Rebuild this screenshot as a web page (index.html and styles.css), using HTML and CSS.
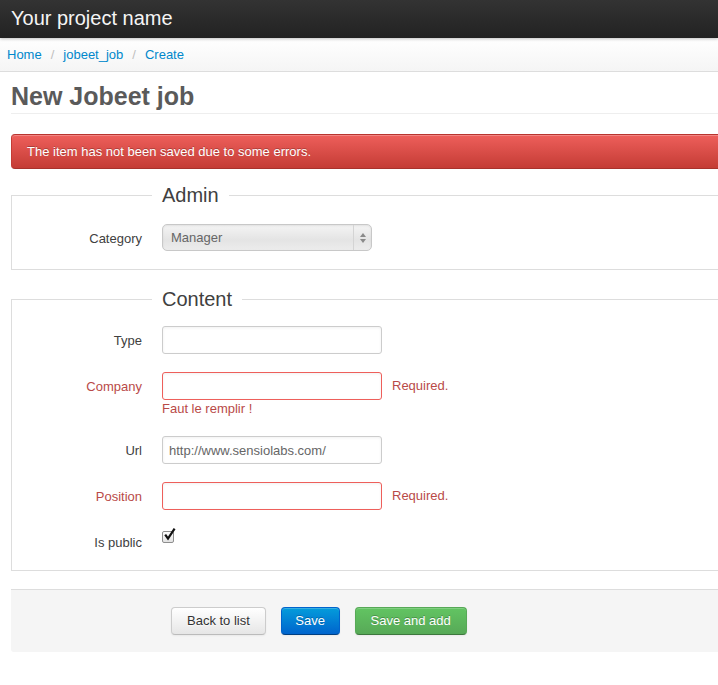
FILE: index.html
```html
<!DOCTYPE html>
<html>
<head>
<meta charset="utf-8">
<title>New Jobeet job</title>
<link rel="stylesheet" href="styles.css">
</head>
<body>
<div class="topbar"><span class="brand">Your project name</span></div>
<ul class="breadcrumb">
  <li><a href="#">Home</a></li>
  <li class="divider">/</li>
  <li><a href="#">jobeet_job</a></li>
  <li class="divider">/</li>
  <li><a href="#">Create</a></li>
</ul>
<div class="container">
  <div class="page-header"><h1>New Jobeet job</h1></div>
  <div class="alert">The item has not been saved due to some errors.</div>
  <form>
    <fieldset class="fs fs-admin">
      <legend>Admin</legend>
      <div class="row">
        <label class="lbl">Category</label>
        <div class="field">
          <div class="select">
            <span class="select-text">Manager</span>
            <span class="select-arrows">
              <svg width="8" height="12" viewBox="0 0 8 12"><path d="M4 1 L7 5 H1 Z M4 11 L7 7 H1 Z" fill="#8a8a8a"/></svg>
            </span>
          </div>
        </div>
      </div>
    </fieldset>
    <fieldset class="fs">
      <legend>Content</legend>
      <div class="row">
        <label class="lbl">Type</label>
        <div class="field"><input class="text" type="text"></div>
      </div>
      <div class="row error">
        <label class="lbl">Company</label>
        <div class="field">
          <div class="inline"><input class="text" type="text"><span class="help-inline">Required.</span></div>
          <div class="help-block">Faut le remplir !</div>
        </div>
      </div>
      <div class="row">
        <label class="lbl">Url</label>
        <div class="field"><input class="text" type="text" value="http://www.sensiolabs.com/"></div>
      </div>
      <div class="row error">
        <label class="lbl">Position</label>
        <div class="field">
          <div class="inline"><input class="text" type="text"><span class="help-inline">Required.</span></div>
        </div>
      </div>
      <div class="row">
        <label class="lbl">Is public</label>
        <div class="field">
          <span class="checkbox">
            <svg class="check" width="16" height="16" viewBox="0 0 16 16"><path d="M3.2 7.6 L6 11.6 L12.6 1.6" fill="none" stroke="#111" stroke-width="2.2" stroke-linejoin="miter"/></svg>
          </span>
        </div>
      </div>
    </fieldset>
    <div class="actions">
      <button type="button" class="btn">Back to list</button>
      <button type="button" class="btn primary">Save</button>
      <button type="button" class="btn success">Save and add</button>
    </div>
  </form>
</div>
</body>
</html>
```
FILE: styles.css
```css
html, body {
  margin: 0;
  padding: 0;
  overflow: hidden;
  background: #fff;
}
body {
  font-family: "Liberation Sans", Arial, sans-serif;
  font-size: 13px;
  line-height: 18px;
  color: #404040;
  width: 718px;
  height: 685px;
}
.topbar {
  height: 38px;
  background: linear-gradient(#333333, #222222);
  box-shadow: 0 1px 3px rgba(0,0,0,0.25);
  position: relative;
  z-index: 2;
}
.brand {
  display: block;
  padding-left: 11px;
  font-size: 20px;
  line-height: 36px;
  color: #f5f5f5;
}
.breadcrumb {
  list-style: none;
  margin: 0;
  padding: 0 7px;
  height: 33px;
  display: flex;
  align-items: center;
  background: linear-gradient(#ffffff, #f5f5f5);
  border-bottom: 1px solid #dddddd;
}
.breadcrumb li { line-height: 18px; }
.breadcrumb a { color: #0088cc; text-decoration: none; }
.breadcrumb .divider { color: #bfbfbf; padding: 0 9px; }
.container {
  margin-left: 11px;
  width: 940px;
}
.page-header {
  margin-top: 10px;
  padding-bottom: 3px;
  border-bottom: 1px solid #eeeeee;
}
.page-header h1 {
  margin: 0;
  font-size: 25px;
  line-height: 28px;
  font-weight: bold;
  color: #5a5a5a;
}
.alert {
  margin-top: 20px;
  height: 33px;
  line-height: 33px;
  padding-left: 15px;
  color: #fff;
  text-shadow: 0 -1px 0 rgba(0,0,0,0.25);
  background: linear-gradient(#ee5f5b, #c43c35);
  border: 1px solid #c43c35;
  border-bottom-color: #a8322c;
  border-top-color: #b8342f;
  border-radius: 4px;
  box-shadow: inset 0 1px 0 rgba(255,255,255,0.25);
}
form { margin: 0; }
.fs {
  margin: 14px 0 0 0;
  padding: 0;
  border: 1px solid #dddddd;
  min-width: 0;
}
.fs + .fs { margin-top: 17px; }
.fs legend {
  margin-left: 140px;
  padding: 0 10px;
  font-size: 20px;
  line-height: 24px;
  color: #404040;
}
.fs > .row:first-of-type { margin-top: 15px; }
.fs-admin > .row:first-of-type { margin-top: 17px; }
.row {
  display: flex;
  margin-bottom: 18px;
}
.lbl {
  width: 130px;
  flex: none;
  text-align: right;
  padding-top: 6px;
  line-height: 18px;
  color: #404040;
}
.field {
  margin-left: 20px;
}
.inline { display: flex; align-items: center; }
input.text {
  box-sizing: border-box;
  width: 220px;
  height: 28px;
  margin: 0;
  padding: 4px 6px;
  font-family: inherit;
  font-size: 13px;
  color: #666;
  border: 1px solid #cccccc;
  border-radius: 3px;
  box-shadow: inset 0 1px 3px rgba(0,0,0,0.06);
  background: #fff;
  outline: none;
}
.error .lbl { color: #b94a48; }
.error input.text { border-color: #ee5f5b; }
.help-inline { color: #b94a48; margin-left: 10px; line-height: 18px; }
.help-block { color: #b94a48; line-height: 18px; }
.select {
  box-sizing: border-box;
  width: 210px;
  height: 27px;
  display: flex;
  align-items: center;
  border: 1px solid #c8c8c8;
  border-radius: 5px;
  background: linear-gradient(#f4f4f4, #e4e4e4 60%, #ececec);
  box-shadow: inset 0 1px 2px rgba(0,0,0,0.08);
}
.select-text {
  flex: 1;
  padding-left: 8px;
  color: #666;
}
.select-arrows {
  width: 17px;
  height: 100%;
  border-left: 1px solid #d4d4d4;
  display: flex;
  align-items: center;
  justify-content: center;
}
.checkbox {
  display: block;
  position: relative;
  box-sizing: border-box;
  width: 12px;
  height: 12px;
  margin-top: 3px;
  border: 1px solid #8e8e8e;
  border-radius: 2px;
  background: linear-gradient(#fdfdfd, #e2e2e2);
}
.check {
  position: absolute;
  left: -1px;
  top: -5px;
}
.actions {
  margin-top: 18px;
  padding: 17px 20px 17px 160px;
  background: #f5f5f5;
  border-top: 1px solid #dddddd;
  border-radius: 0 0 3px 3px;
  display: flex;
  gap: 15px;
}
.btn {
  box-sizing: border-box;
  height: 28px;
  padding: 0 15px;
  font-family: inherit;
  font-size: 13px;
  line-height: 26px;
  color: #333;
  background: linear-gradient(#ffffff, #e6e6e6);
  border: 1px solid #cccccc;
  border-bottom-color: #bbbbbb;
  border-radius: 4px;
  box-shadow: inset 0 1px 0 rgba(255,255,255,0.2), 0 1px 2px rgba(0,0,0,0.05);
  text-shadow: 0 1px 1px rgba(255,255,255,0.75);
  cursor: pointer;
}
.btn.primary {
  padding: 0 13.5px;
  color: #fff;
  background: linear-gradient(#049cdb, #0064cd);
  border-color: #0064cd #0064cd #003f81;
  text-shadow: 0 -1px 0 rgba(0,0,0,0.25);
}
.btn.success {
  color: #fff;
  background: linear-gradient(#62c462, #57a957);
  border-color: #57a957 #57a957 #3d773d;
  text-shadow: 0 -1px 0 rgba(0,0,0,0.25);
}
```
